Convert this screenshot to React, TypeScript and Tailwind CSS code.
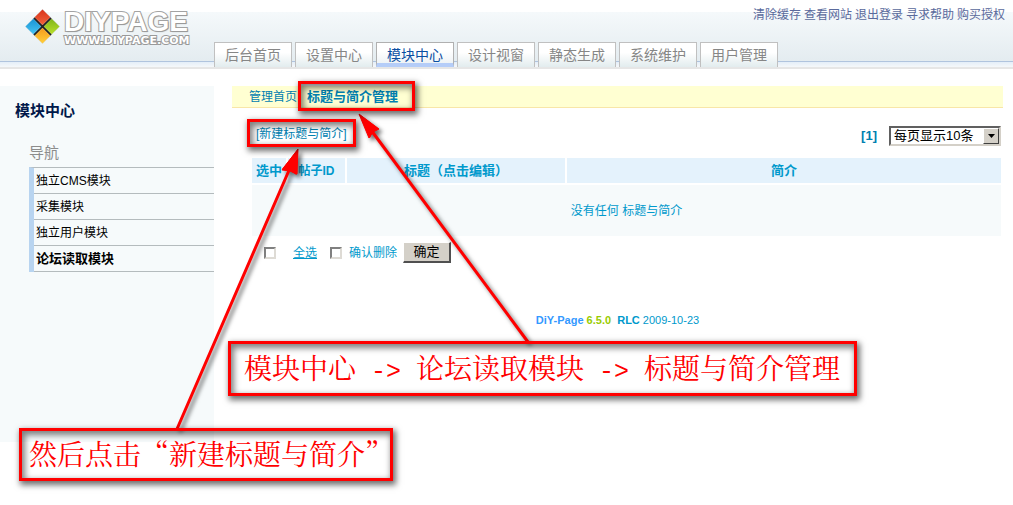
import { ReactNode } from "react";

const tabs = ["后台首页", "设置中心", "模块中心", "设计视窗", "静态生成", "系统维护", "用户管理"];
const topLinks = ["清除缓存", "查看网站", "退出登录", "寻求帮助", "购买授权"];
const modules = ["独立CMS模块", "采集模块", "独立用户模块", "论坛读取模块"];

function Logo() {
  return (
    <a href="#" className="ml-6 flex items-start gap-1 pt-2">
      <svg width="36" height="36" viewBox="0 0 36 36" aria-hidden="true">
        <defs>
          <linearGradient id="red" x1="0" y1="0" x2="0" y2="1">
            <stop offset="0" stopColor="#d9331c" />
            <stop offset="1" stopColor="#f0643c" />
          </linearGradient>
          <linearGradient id="blue" x1="0" y1="0" x2="0" y2="1">
            <stop offset="0" stopColor="#1793d6" />
            <stop offset="1" stopColor="#49c4f2" />
          </linearGradient>
          <linearGradient id="green" x1="0" y1="0" x2="0" y2="1">
            <stop offset="0" stopColor="#7fb51c" />
            <stop offset="1" stopColor="#b9e02c" />
          </linearGradient>
          <linearGradient id="gold" x1="0" y1="0" x2="0" y2="1">
            <stop offset="0" stopColor="#f59a1c" />
            <stop offset="1" stopColor="#ffcf3a" />
          </linearGradient>
        </defs>
        <path d="M18.500 1 L36 18.500 L18.500 36 L1 18.500Z" fill="#d9dee0" />
        <path d="M10 10 L27 27 M27 10 L10 27" stroke="#222" strokeWidth="2" />
        <path d="M18.500 1.500 L26.300 9.300 L18.500 17.100 L10.700 9.300Z" fill="url(#red)" />
        <path d="M9.300 10.700 L17.100 18.500 L9.300 26.300 L1.500 18.500Z" fill="url(#blue)" />
        <path d="M27.700 10.700 L35.500 18.500 L27.700 26.300 L19.900 18.500Z" fill="url(#green)" />
        <path d="M18.500 19.900 L26.300 27.700 L18.500 35.500 L10.700 27.700Z" fill="url(#gold)" />
      </svg>
      <span className="flex flex-col font-bold text-white [paint-order:stroke_fill]">
        <span className="font-['Liberation_Sans',sans-serif] text-[28px] leading-7 [-webkit-text-stroke:2px_#a3a3a3] [text-shadow:1px_1px_1px_#999]">
          DIYPAGE
        </span>
        <span className="font-['DejaVu_Sans',sans-serif] text-[11px] leading-[10px] [-webkit-text-stroke:2px_#999999]">
          WWW.DIYPAGE.COM
        </span>
      </span>
    </a>
  );
}

function Header() {
  return (
    <header className="relative h-[69px] border-b-2 border-[#e6e6e6] bg-white pt-3">
      <div className="h-[50px] border-b border-[#b0c4de] bg-linear-to-b from-[#f5f9fb] to-[#e4ecf0]" />
      <div className="h-[5px] bg-linear-to-b from-[#e4eef8] to-[#f5f8fa]" />
      <div className="absolute inset-0 flex items-start">
        <div className="w-[214px] shrink-0">
          <Logo />
        </div>
        <div className="flex grow flex-col">
          <nav className="flex h-[42px] justify-end gap-[3px] pt-[5px] pr-2 text-xs leading-5 text-[#5a6a9c]">
            {topLinks.map((t) => (
              <a key={t} href="#" className="h-5 whitespace-nowrap">{t}</a>
            ))}
          </nav>
          <nav className="flex gap-[3px] text-sm leading-6">
            {tabs.map((t) => (
              <a
                key={t}
                href="#"
                className={
                  t === "模块中心"
                    ? "h-[25px] border border-b-4 border-[#b0b0b0] border-b-[#b5cdf8] bg-linear-to-b from-white from-40% to-[#eef3f6] px-[10px] text-[#0a4ea2]"
                    : "h-[25px] border border-b-0 border-[#c0c0c0] bg-linear-to-b from-white from-40% to-[#e2ecee] px-[10px] text-[#868686]"
                }
              >
                {t}
              </a>
            ))}
          </nav>
        </div>
      </div>
    </header>
  );
}

function Sidebar() {
  return (
    <aside className="min-h-[356px] w-[214px] shrink-0 bg-[#f6fafb] pt-[13px]">
      <h1 className="pl-[15px] text-[15px] leading-6 font-bold text-[#00184a]">模块中心</h1>
      <h2 className="mt-[18px] pl-[29px] text-[15px] leading-[23px] text-[#8c8c8c]">导航</h2>
      <ul className="mt-[3px] ml-[29px] border-t border-l-5 border-t-[#b4bbbd] border-l-[#b8d4f0]">
        {modules.map((m) => (
          <li key={m} className="flex h-[26px] items-center border-b border-[#b4bbbd] pt-px pl-0.5">
            <a href="#" className={m === "论坛读取模块" ? "text-[13px] font-bold text-black" : "text-xs text-black"}>{m}</a>
          </li>
        ))}
      </ul>
    </aside>
  );
}

const box =
  "size-3 appearance-none border-2 border-t-[#808080] border-l-[#808080] border-r-[#dedbd5] border-b-[#dedbd5] bg-white checked:bg-[#0099cc]";

function Content() {
  return (
    <main className="ml-[18px] grow pr-[10px] text-[#0099cc]">
      <div className="flex h-[22px] items-center gap-[10px] border-b border-[#f8e6a8] bg-[#ffffd2] pl-[17px] text-[#0080b0]">
        <a href="#">管理首页</a>
        <a href="#" className="text-[13px] font-bold">标题与简介管理</a>
      </div>
      <div className="pr-0.5 pl-5">
        <div className="flex h-[50px] items-start justify-between pt-4">
          <a href="#" className="pl-1 leading-5 text-[#0080b0]">[新建标题与简介]</a>
          <div className="flex items-center gap-3 pt-0.5">
            <a href="#" className="text-[13px] font-bold text-[#0080b0]">[1]</a>
            <div className="relative">
              <select
                aria-label="每页显示"
                className="block h-5 w-28 appearance-none border-2 border-t-[#606060] border-r-[#d4d0c8] border-b-[#d4d0c8] border-l-[#606060] bg-white pl-[3px] text-[13px] leading-4 text-black"
              >
                <option>每页显示10条</option>
                <option>每页显示20条</option>
              </select>
              <span className="pointer-events-none absolute top-0.5 right-0.5 flex h-4 w-4 items-center justify-center border border-t-white border-r-[#404040] border-b-[#404040] border-l-white bg-[#d4d0c8]">
                <svg width="7" height="4" viewBox="0 0 7 4" aria-hidden="true">
                  <path d="M0 0h7L3.500 4z" />
                </svg>
              </span>
            </div>
          </div>
        </div>
        <table className="-mx-0.5 w-[calc(100%+4px)] table-fixed border-separate border-spacing-x-0.5 border-spacing-y-0">
          <colgroup>
            <col className="w-[34px]" />
            <col className="w-[57px]" />
            <col className="w-[218px]" />
            <col />
          </colgroup>
          <thead>
            <tr className="h-[25px] text-[13px] leading-5 [&>th]:bg-[#e4f2fc] [&>th]:p-0 [&>th]:whitespace-nowrap">
              <th>选中</th>
              <th className="text-xs">帖子ID</th>
              <th>标题（点击编辑）</th>
              <th>简介</th>
            </tr>
          </thead>
          <tbody>
            <tr>
              <td colSpan={4} className="h-[53px] border-t-2 border-white bg-[#f6fafb] p-0 text-center">没有任何 标题与简介</td>
            </tr>
          </tbody>
        </table>
        <form className="flex items-center pt-[6px] pl-3" onSubmit={(e) => e.preventDefault()}>
          <input type="checkbox" id="all" className={box} />
          <label htmlFor="all" className="ml-[17px] underline">全选</label>
          <input type="checkbox" id="confirm" className={"ml-[13px] " + box} />
          <label htmlFor="confirm" className="ml-[7px]">确认删除</label>
          <button
            type="submit"
            className="ml-[6px] h-[21px] w-12 border border-t-white border-r-2 border-r-[#505050] border-b-2 border-b-[#505050] border-l-white bg-[#d4d0c8] text-[13px] leading-4 text-black"
          >
            确定
          </button>
        </form>
      </div>
      <footer className="mt-[49px] text-center font-['Liberation_Sans',sans-serif] text-[11px] leading-4">
        <b className="text-[#3399ff]">DiY-Page</b> <b className="text-[#99cc00]">6.5.0</b>&nbsp; <b>RLC</b> 2009-10-23
      </footer>
    </main>
  );
}

function Frame({ place, children }: { place: string; children?: ReactNode }) {
  return (
    <div
      className={
        "absolute border-3 border-[#ff0000] text-[28px] whitespace-nowrap text-[#ff0000] shadow-[2px_3px_6px_1px_#00000090,inset_2px_3px_6px_1px_#00000080] " +
        place
      }
    >
      {children}
    </div>
  );
}

function Step() {
  return <span className="font-['Liberation_Mono',monospace] text-[25px]">{" -> "}</span>;
}

function Notes() {
  return (
    <div className="pointer-events-none absolute top-0 left-0">
      <svg
        width="600"
        height="440"
        viewBox="0 0 600 440"
        className="absolute top-0 left-0 drop-shadow-[3px_3px_2px_#00000090]"
        aria-hidden="true"
      >
        <g stroke="#ff0000" strokeWidth="3" fill="#ff0000">
          <path d="M177 429L290 168M528 342L371 130" />
          <path stroke="none" d="M298 149L296.500 175L290 171L282 169Z" />
          <path stroke="none" d="M359 114L379 129L373 131L370 138Z" />
        </g>
        <path d="M298 149L297 174L290 171L282 170Z M359 114L379 129L373 132L369 138Z" fill="#ff0000" stroke="#ff0000" strokeWidth="1" />
      </svg>
      <Frame place="top-[81px] left-[298px] h-[30px] w-[117px]" />
      <Frame place="top-[119px] left-[247px] h-[28px] w-[109px]" />
      <Frame place="top-[341px] left-[228px] h-[55px] w-[629px] pl-[13px] leading-[47px] font-['Noto_Serif_CJK_SC','Noto_Sans_CJK_SC',serif]">
        模块中心<Step />论坛读取模块<Step />标题与简介管理
      </Frame>
      <Frame place="top-[428px] left-[19px] h-[53px] w-[374px] pl-[7px] leading-[45px] font-['Noto_Serif_CJK_SC','Noto_Sans_CJK_SC',serif]">
        然后点击“新建标题与简介”
      </Frame>
    </div>
  );
}

export default function App() {
  return (
    <div lang="zh-CN" className="relative min-h-screen bg-white font-['Liberation_Sans','Noto_Sans_CJK_SC',sans-serif] text-xs">
      <Header />
      <div className="flex items-start pt-[17px]">
        <Sidebar />
        <Content />
      </div>
      <Notes />
    </div>
  );
}
